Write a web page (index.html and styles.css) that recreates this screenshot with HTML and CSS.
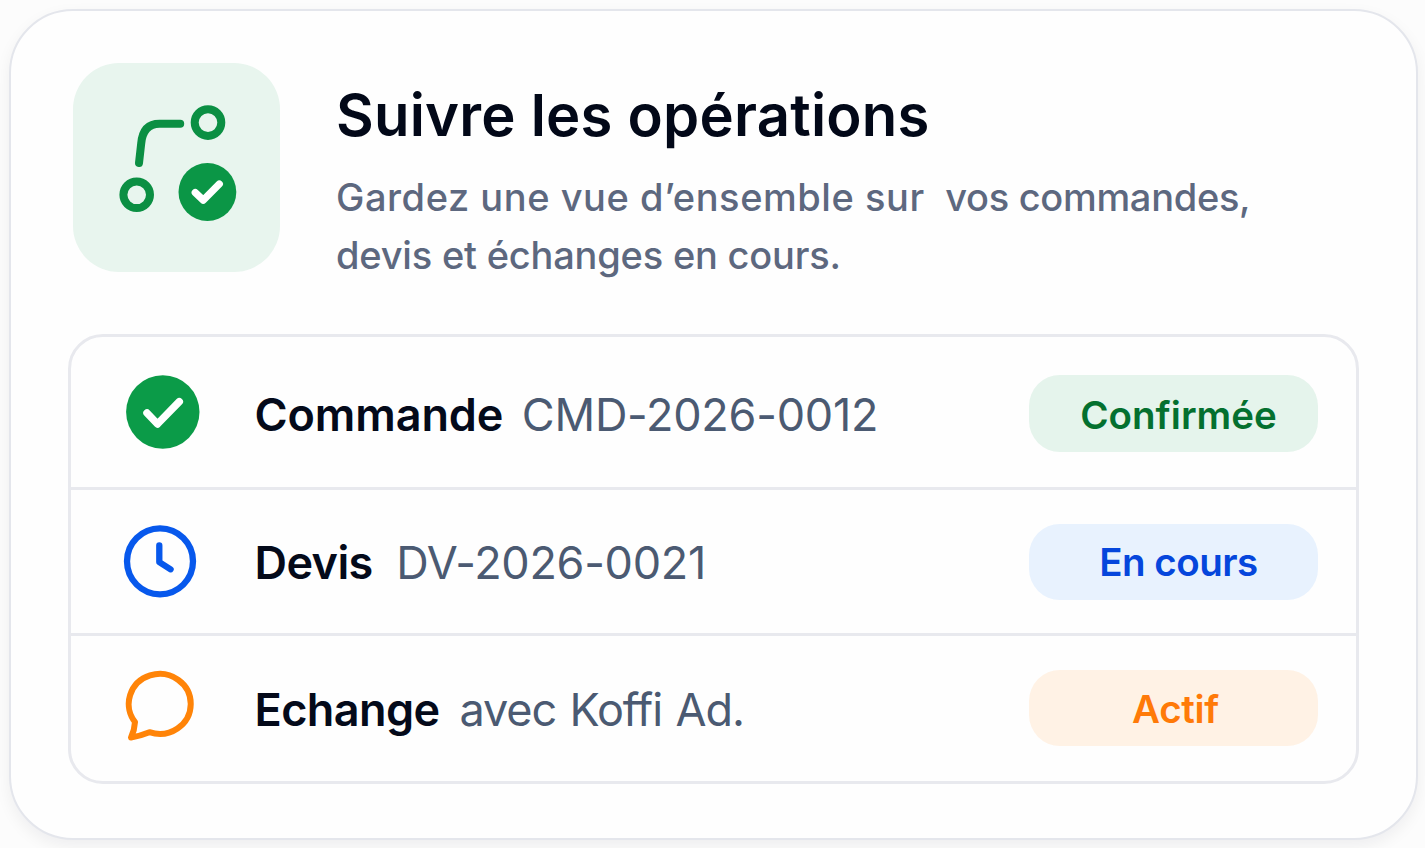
FILE: index.html
```
<!DOCTYPE html>
<html lang="fr">
<head>
<meta charset="utf-8">
<title>Suivre les opérations</title>
<link rel="stylesheet" href="styles.css">
</head>
<body>
<main class="card">
  <header class="head">
    <div class="tile">
      <svg class="tile-icon" viewBox="73 63 207 209" fill="none" stroke="#0b8f43" stroke-width="8" stroke-linecap="round" stroke-linejoin="round">
        <path d="M139 163L141.200 143.500Q143 123.800 159.500 123.800H180.200"/>
        <circle cx="208" cy="122.600" r="13.300"/>
        <circle cx="136.700" cy="194.800" r="13.300"/>
        <circle cx="207.400" cy="192" r="28.900" fill="#0b9646" stroke="none"/>
        <path d="M195.300 192.600L203.200 200.200L219.300 184" stroke="#fff" stroke-width="7.300"/>
      </svg>
    </div>
    <div class="intro">
      <h1 class="title">Suivre les opérations</h1>
      <p class="subtitle"><span class="wide">Gardez une vue d’ensemble sur</span><span class="tail">vos commandes,</span><br>devis et échanges en cours.</p>
    </div>
  </header>
  <section class="table">
    <div class="row row-order">
      <svg class="row-icon" viewBox="120 372 80 80" fill="none" stroke-linecap="round" stroke-linejoin="round">
        <circle cx="162.800" cy="412" r="36.700" fill="#0b9b48"/>
        <path d="M147 413L157.500 424L179.300 401.700" stroke="#fff" stroke-width="7.500"/>
      </svg>
      <div class="label"><strong class="name">Commande</strong><span class="ref">CMD-2026-0012</span></div>
      <span class="pill pill-green">Confirmée</span>
    </div>
    <div class="row row-quote">
      <svg class="row-icon" viewBox="120 522 80 80" fill="none" stroke="#0758ec" stroke-width="6.300" stroke-linecap="round" stroke-linejoin="round">
        <circle cx="160" cy="561.300" r="33"/>
        <path d="M159.300 545.500V562.200L170.600 569.300"/>
      </svg>
      <div class="label"><strong class="name">Devis</strong><span class="ref">DV-2026-0021</span></div>
      <span class="pill pill-blue">En cours</span>
    </div>
    <div class="row row-chat">
      <svg class="row-icon" viewBox="120 668.500 80 80" fill="none" stroke="#ff8408" stroke-width="6" stroke-linecap="round" stroke-linejoin="round">
        <path d="M135 721.500A31 30 0 1 1 149.400 731.700Q140 735.500 131 737Q134.600 729.500 135 721.500Z"/>
      </svg>
      <div class="label"><strong class="name">Echange</strong><span class="ref">avec Koffi Ad.</span></div>
      <span class="pill pill-orange">Actif</span>
    </div>
  </section>
</main>
</body>
</html>
```
FILE: styles.css
```
* { box-sizing: border-box; }

body {
  margin: 0;
  height: 848px;
  padding: 9px 7px 8px 9px;
  overflow: hidden;
  background: #fcfcfc;
  font-family: Inter, "Liberation Sans", sans-serif;
}

.card {
  height: 831px;
  padding: 52px 57px 0 57px;
  border: 2px solid #e4e6ec;
  border-radius: 64px;
  background: #fefefe;
  box-shadow: 0 6px 16px rgba(20, 24, 32, 0.06);
}

.head {
  display: flex;
  gap: 56px;
  height: 271px;
  padding-left: 5px;
}

.tile {
  width: 207px;
  height: 209px;
  border-radius: 46px;
  background: #e8f5ee;
}

.tile-icon { display: block; width: 207px; height: 209px; }

.intro { padding-top: 17px; }

.title {
  margin: 0;
  font-size: 58px;
  font-weight: 600;
  line-height: 70px;
  letter-spacing: 0.22px;
  color: #020818;
}

.subtitle {
  margin: 18px 0 0;
  font-size: 38px;
  font-weight: 450;
  line-height: 58.300px;
  letter-spacing: -0.2px;
  white-space: nowrap;
  color: #5d687f;
}

.wide { letter-spacing: 0.55px; }
.tail { margin-left: 20.500px; letter-spacing: -0.3px; }

.table {
  width: 1291px;
  border: 3px solid #e8e9ee;
  border-radius: 35px;
}

.row {
  display: flex;
  align-items: center;
  padding: 0 38.500px 0 49px;
}

.row + .row { border-top: 3px solid #e8e9ee; }

.row-order { height: 150px; }
.row-quote { height: 146px; }
.row-chat { height: 148px; }

.row-icon { flex: none; width: 80px; height: 80px; }

.label {
  flex: 1;
  display: flex;
  align-items: baseline;
  margin-left: 54.500px;
  padding-top: 2px;
  font-size: 45px;
  line-height: 54px;
  white-space: nowrap;
}

.row-order .label { padding-top: 6px; }

.name { font-weight: 600; color: #040a1a; }
.ref { color: #4b5a72; }

.row-order .name { letter-spacing: -0.1px; }
.row-order .ref { margin-left: 18.500px; letter-spacing: -0.25px; }
.row-quote .name { letter-spacing: -0.6px; }
.row-quote .ref { margin-left: 23.500px; letter-spacing: -0.3px; }
.row-chat .name { letter-spacing: -0.6px; }
.row-chat .ref { margin-left: 20px; letter-spacing: -1.1px; word-spacing: 2px; }

.pill {
  flex: none;
  width: 289px;
  height: 76px;
  border-radius: 31px;
  font-size: 38.500px;
  font-weight: 600;
  line-height: 77px;
  text-align: center;
}

.pill-green {
  height: 77px;
  margin-top: 3px;
  padding-left: 11px;
  line-height: 80px;
  background: #e5f4ec;
  color: #04702f;
}

.pill-blue {
  padding-left: 11px;
  letter-spacing: -0.5px;
  background: #e8f2fe;
  color: #0546dc;
}

.pill-orange {
  margin-bottom: 2px;
  padding-left: 5px;
  letter-spacing: -0.3px;
  line-height: 78px;
  background: #fff2e5;
  color: #ff7a08;
}
```
